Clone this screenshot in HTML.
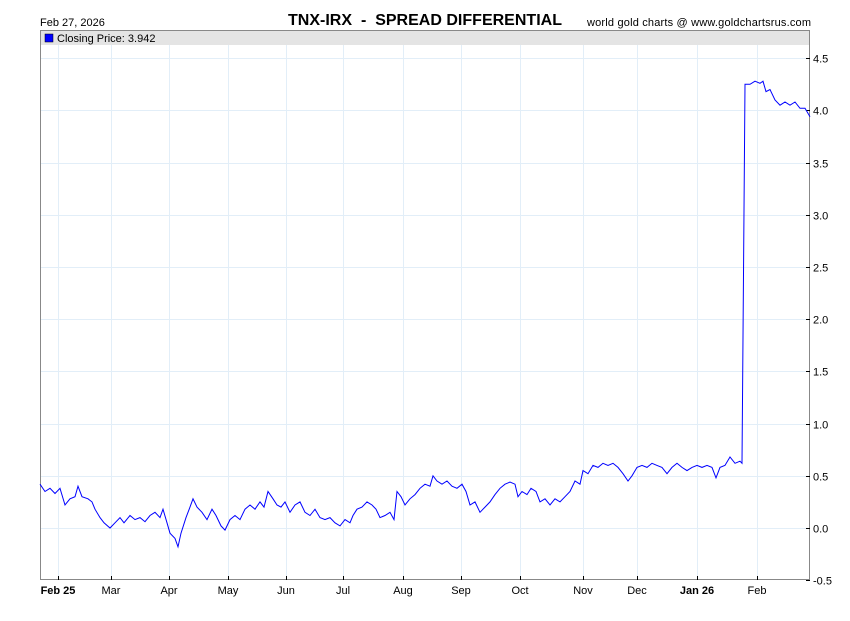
<!DOCTYPE html>
<html><head><meta charset="utf-8"><style>
body{margin:0;background:#fff;width:850px;height:616px;overflow:hidden;font-family:"Liberation Sans",sans-serif}
</style></head><body>
<svg width="850" height="616" xmlns="http://www.w3.org/2000/svg" font-family="Liberation Sans, sans-serif">
<text x="40" y="26" font-size="11">Feb 27, 2026</text>
<text x="288" y="25" font-size="16" font-weight="bold" textLength="274">TNX-IRX&#160;&#160;-&#160;&#160;SPREAD DIFFERENTIAL</text>
<text x="587" y="26" font-size="11" textLength="224">world gold charts @ www.goldchartsrus.com</text>
<rect x="40.5" y="30.5" width="769" height="549" fill="#fff" stroke="#888"/>
<rect x="41" y="31" width="768" height="14" fill="#e4e4e4"/>
<g id="grid" stroke="#e2eef8" stroke-width="1"></g>
<rect x="45" y="34" width="8" height="8" fill="#0000ff" stroke="#000" stroke-width="0.5"/>
<text x="57" y="42" font-size="11">Closing Price: 3.942</text>
<g id="ylab" font-size="11"></g>
<g id="xlab" font-size="11"></g>
<polyline id="line" fill="none" stroke="#0000ff" stroke-width="1"/>
</svg>
<script>
var ns="http://www.w3.org/2000/svg";
function Y(v){return 528-v*104.4;}
var grid=document.getElementById('grid'),yl=document.getElementById('ylab'),xl=document.getElementById('xlab');
for(var i=0;i<=10;i++){var v=4.5-i*0.5,y=Math.round(Y(v))+0.5;
 if(i<10){var l=document.createElementNS(ns,'line');l.setAttribute('x1',41);l.setAttribute('x2',809);l.setAttribute('y1',y);l.setAttribute('y2',y);grid.appendChild(l);}
 var t=document.createElementNS(ns,'line');t.setAttribute('x1',806);t.setAttribute('x2',810);t.setAttribute('y1',y);t.setAttribute('y2',y);t.setAttribute('stroke','#000');yl.appendChild(t);
 var s=document.createElementNS(ns,'text');s.setAttribute('x',813);s.setAttribute('y',y+4);s.textContent=v.toFixed(1);yl.appendChild(s);}
var xs=[[58,'Feb 25',1],[111,'Mar'],[169,'Apr'],[228,'May'],[286,'Jun'],[343,'Jul'],[403,'Aug'],[461,'Sep'],[520,'Oct'],[583,'Nov'],[637,'Dec'],[697,'Jan 26',1],[757,'Feb']];
xs.forEach(function(a){var x=a[0]+0.5;var l=document.createElementNS(ns,'line');l.setAttribute('x1',x);l.setAttribute('x2',x);l.setAttribute('y1',45);l.setAttribute('y2',579);grid.appendChild(l);
 var t=document.createElementNS(ns,'line');t.setAttribute('x1',x);t.setAttribute('x2',x);t.setAttribute('y1',576);t.setAttribute('y2',580);t.setAttribute('stroke','#000');xl.appendChild(t);
 var s=document.createElementNS(ns,'text');s.setAttribute('x',a[0]);s.setAttribute('y',594);s.setAttribute('text-anchor','middle');if(a[2])s.setAttribute('font-weight','bold');s.textContent=a[1];xl.appendChild(s);});
var d=[40,.42,45,.35,50,.38,55,.33,60,.38,65,.22,70,.28,75,.3,78,.4,82,.3,88,.28,92,.25,95,.18,100,.1,104,.05,110,0,115,.05,120,.1,124,.05,130,.12,135,.08,140,.1,145,.06,150,.12,155,.15,160,.1,163,.18,167,.05,170,-.05,175,-.1,178,-.18,181,-.05,186,.1,190,.2,193,.28,197,.2,202,.15,207,.08,212,.18,216,.12,221,.02,225,-.02,230,.08,235,.12,240,.08,245,.18,250,.22,255,.18,260,.25,264,.2,268,.35,273,.28,277,.22,281,.2,285,.25,290,.15,295,.22,300,.25,305,.15,310,.12,315,.18,320,.1,325,.08,330,.1,335,.05,340,.02,345,.08,350,.05,353,.12,357,.18,362,.2,367,.25,372,.22,376,.18,380,.1,385,.12,390,.15,394,.08,397,.35,401,.3,405,.22,410,.28,415,.32,420,.38,425,.42,430,.4,433,.5,437,.45,442,.42,447,.45,452,.4,457,.38,462,.42,466,.35,470,.22,475,.25,480,.15,485,.2,490,.25,495,.32,500,.38,505,.42,510,.44,515,.42,518,.3,522,.35,527,.32,531,.38,536,.35,540,.25,545,.28,550,.22,555,.28,560,.25,565,.3,570,.35,575,.45,580,.42,583,.55,588,.52,593,.6,598,.58,603,.62,608,.6,613,.62,618,.58,623,.52,628,.45,632,.5,637,.58,642,.6,647,.58,652,.62,657,.6,662,.58,667,.52,672,.58,677,.62,682,.58,687,.55,692,.58,697,.6,702,.58,707,.6,712,.58,716,.48,720,.58,725,.6,730,.68,735,.62,740,.64,742,.62,745,4.25,750,4.25,755,4.28,760,4.26,763,4.28,766,4.18,770,4.2,775,4.1,780,4.05,785,4.08,790,4.05,795,4.08,800,4.02,805,4.02,810,3.94];
var p=[];for(var i=0;i<d.length;i+=2)p.push(d[i]+','+Y(d[i+1]).toFixed(1));
document.getElementById('line').setAttribute('points',p.join(' '));
</script>
</body></html>
